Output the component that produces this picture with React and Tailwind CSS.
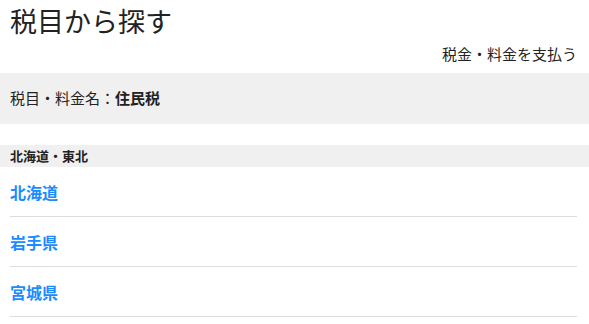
const prefectures = ["北海道", "岩手県", "宮城県"];

export default function App() {
  return (
    <div
      className="w-[589px] h-[324px] overflow-hidden bg-white text-[#222]"
      style={{ fontFamily: '"Noto Sans CJK JP", "Noto Sans", sans-serif' }}
    >
      {/* タイトル */}
      <h1 className="px-[10px] pt-[1px] text-[27px] leading-[40px] font-normal">
        税目から探す
      </h1>

      {/* 支払うリンク */}
      <div className="mt-[3px] flex justify-end px-[12px] text-[15px] leading-[20px]">
        税金・料金を支払う
      </div>

      {/* 選択中の税目 */}
      <div className="mt-[9px] flex h-[51px] items-center bg-[#f0f0f0] px-[10px] text-[15px]">
        税目・料金名：<span className="font-bold">住民税</span>
      </div>

      {/* 地域ヘッダー */}
      <div className="mt-[21px] flex h-[22px] items-center bg-[#f0f0f0] px-[10px] text-[13px] font-bold">
        北海道・東北
      </div>

      {/* 都道府県リスト */}
      <ul className="pl-[10px] pr-[12px]">
        {prefectures.map((p) => (
          <li
            key={p}
            className="flex h-[50px] items-center border-b border-[#dddddd] text-[16px] font-bold text-[#1a8cff]"
          >
            {p}
          </li>
        ))}
      </ul>
    </div>
  );
}
